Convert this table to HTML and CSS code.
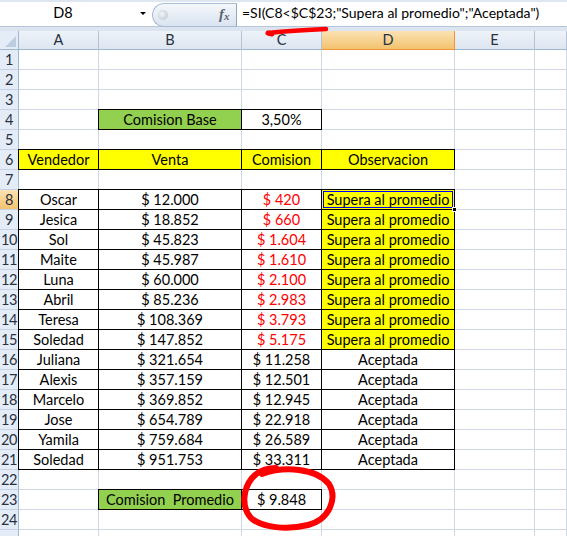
FILE: index.html
```html
<!DOCTYPE html>
<html>
<head>
<meta charset="utf-8">
<link rel="stylesheet" href="styles.css">
</head>
<body>
<div class="app">
  <div class="fbar">
    <div class="namebox">D8<span class="drop"></span></div>
    <div class="pill"><span class="knob"></span><span class="fx">f<sub>x</sub></span></div>
    <div class="formula">=SI(C8&lt;$C$23;"Supera al promedio";"Aceptada")</div>
  </div>
  <div class="band"></div>
  <div class="sheet">
    <div class="corner"></div><div class="ch">A</div><div class="ch">B</div><div class="ch">C</div><div class="ch sel">D</div><div class="ch">E</div><div class="ch"></div>

    <div class="rh">1</div><div class="c"></div><div class="c"></div><div class="c"></div><div class="c"></div><div class="c"></div><div class="c"></div>
    <div class="rh">2</div><div class="c"></div><div class="c"></div><div class="c"></div><div class="c"></div><div class="c"></div><div class="c"></div>
    <div class="rh">3</div><div class="c"></div><div class="c"></div><div class="c"></div><div class="c"></div><div class="c"></div><div class="c"></div>
    <div class="rh">4</div><div class="c"></div><div class="c b g">Comision Base</div><div class="c b">3,50%</div><div class="c"></div><div class="c"></div><div class="c"></div>
    <div class="rh">5</div><div class="c"></div><div class="c"></div><div class="c"></div><div class="c"></div><div class="c"></div><div class="c"></div>
    <div class="rh">6</div><div class="c b y">Vendedor</div><div class="c b y">Venta</div><div class="c b y">Comision</div><div class="c b y">Observacion</div><div class="c"></div><div class="c"></div>
    <div class="rh">7</div><div class="c"></div><div class="c"></div><div class="c"></div><div class="c"></div><div class="c"></div><div class="c"></div>
    <div class="rh sel">8</div><div class="c b">Oscar</div><div class="c b">$ 12.000</div><div class="c b r">$ 420</div><div class="c b y active">Supera al promedio<span class="handle"></span></div><div class="c"></div><div class="c"></div>
    <div class="rh">9</div><div class="c b">Jesica</div><div class="c b">$ 18.852</div><div class="c b r">$ 660</div><div class="c b y">Supera al promedio</div><div class="c"></div><div class="c"></div>
    <div class="rh">10</div><div class="c b">Sol</div><div class="c b">$ 45.823</div><div class="c b r">$ 1.604</div><div class="c b y">Supera al promedio</div><div class="c"></div><div class="c"></div>
    <div class="rh">11</div><div class="c b">Maite</div><div class="c b">$ 45.987</div><div class="c b r">$ 1.610</div><div class="c b y">Supera al promedio</div><div class="c"></div><div class="c"></div>
    <div class="rh">12</div><div class="c b">Luna</div><div class="c b">$ 60.000</div><div class="c b r">$ 2.100</div><div class="c b y">Supera al promedio</div><div class="c"></div><div class="c"></div>
    <div class="rh">13</div><div class="c b">Abril</div><div class="c b">$ 85.236</div><div class="c b r">$ 2.983</div><div class="c b y">Supera al promedio</div><div class="c"></div><div class="c"></div>
    <div class="rh">14</div><div class="c b">Teresa</div><div class="c b">$ 108.369</div><div class="c b r">$ 3.793</div><div class="c b y">Supera al promedio</div><div class="c"></div><div class="c"></div>
    <div class="rh">15</div><div class="c b">Soledad</div><div class="c b">$ 147.852</div><div class="c b r">$ 5.175</div><div class="c b y">Supera al promedio</div><div class="c"></div><div class="c"></div>
    <div class="rh">16</div><div class="c b">Juliana</div><div class="c b">$ 321.654</div><div class="c b">$ 11.258</div><div class="c b">Aceptada</div><div class="c"></div><div class="c"></div>
    <div class="rh">17</div><div class="c b">Alexis</div><div class="c b">$ 357.159</div><div class="c b">$ 12.501</div><div class="c b">Aceptada</div><div class="c"></div><div class="c"></div>
    <div class="rh">18</div><div class="c b">Marcelo</div><div class="c b">$ 369.852</div><div class="c b">$ 12.945</div><div class="c b">Aceptada</div><div class="c"></div><div class="c"></div>
    <div class="rh">19</div><div class="c b">Jose</div><div class="c b">$ 654.789</div><div class="c b">$ 22.918</div><div class="c b">Aceptada</div><div class="c"></div><div class="c"></div>
    <div class="rh">20</div><div class="c b">Yamila</div><div class="c b">$ 759.684</div><div class="c b">$ 26.589</div><div class="c b">Aceptada</div><div class="c"></div><div class="c"></div>
    <div class="rh">21</div><div class="c b">Soledad</div><div class="c b">$ 951.753</div><div class="c b">$ 33.311</div><div class="c b">Aceptada</div><div class="c"></div><div class="c"></div>
    <div class="rh">22</div><div class="c"></div><div class="c"></div><div class="c"></div><div class="c"></div><div class="c"></div><div class="c"></div>
    <div class="rh">23</div><div class="c"></div><div class="c b g">Comision&nbsp; Promedio</div><div class="c b">$ 9.848</div><div class="c"></div><div class="c"></div><div class="c"></div>
    <div class="rh">24</div><div class="c"></div><div class="c"></div><div class="c"></div><div class="c"></div><div class="c"></div><div class="c"></div>
    <div class="rh"></div><div class="c"></div><div class="c"></div><div class="c"></div><div class="c"></div><div class="c"></div><div class="c"></div>
  </div>
  <svg class="ink" width="567" height="536" viewBox="0 0 567 536">
    <path d="M268 33 C 285 31, 305 30, 326 29" fill="none" stroke="#ff0000" stroke-width="4.5" stroke-linecap="round"/>
    <path d="M268 33 L 272 34" fill="none" stroke="#ff0000" stroke-width="5" stroke-linecap="round"/>
    <path d="M262 474 C 284 466, 316 468, 329 484 C 337 497, 331 519, 308 525 C 287 530, 262 528, 251 518 C 241 507, 243 489, 252 478 C 258 471, 266 468, 276 468" fill="none" stroke="#ff0000" stroke-width="6" stroke-linecap="round" stroke-linejoin="round"/>
  </svg>
</div>
</body>
</html>
```
FILE: styles.css
```css
html, body {
  margin: 0;
  padding: 0;
  background: #ffffff;
  overflow: hidden;
}
.app {
  position: relative;
  width: 567px;
  height: 536px;
  overflow: hidden;
  font-family: Lato, "Liberation Sans", sans-serif;
  font-size: 14.5px;
  color: #000;
}
.fbar {
  display: flex;
  height: 26px;
  box-sizing: border-box;
  border-top: 2px solid #dde6f1;
  background: #fff;
}
.namebox {
  position: relative;
  width: 152px;
  box-sizing: border-box;
  text-align: center;
  line-height: 22px;
  padding-right: 26px;
  font-size: 14.5px;
}
.drop {
  position: absolute;
  right: 6px;
  top: 10px;
  width: 0;
  height: 0;
  border-left: 3px solid transparent;
  border-right: 3px solid transparent;
  border-top: 3px solid #000;
}
.pill {
  position: relative;
  width: 85px;
  height: 24px;
  margin-top: 1px;
  box-sizing: border-box;
  border: 1px solid #a9bcd5;
  border-right: 1px solid #8ea5c4;
  border-radius: 12px 0 0 12px;
  background: linear-gradient(#f4f7fb, #d9e3f0);
}
.knob {
  position: absolute;
  left: 5px;
  top: 6px;
  width: 10px;
  height: 10px;
  border-radius: 50%;
  background: radial-gradient(circle at 40% 40%, #f4f6f9, #b7c0cc);
}
.fx {
  position: absolute;
  left: 66px;
  top: 2px;
  font-family: "Liberation Serif", serif;
  font-style: italic;
  font-weight: bold;
  font-size: 15px;
  color: #5d6470;
}
.fx sub {
  font-size: 11px;
  vertical-align: -1px;
}
.formula {
  padding-left: 5px;
  line-height: 22px;
  font-size: 14px;
  white-space: nowrap;
}
.band {
  height: 4px;
  background: #dbe4ef;
  border-top: 1px solid #b7c6d9;
}
.sheet {
  display: grid;
  grid-template-columns: 19px 80px 143px 80px 133px 80px 1fr;
  grid-template-rows: 19px;
  grid-auto-rows: 20px;
}
.corner {
  position: relative;
  background: #e4ecf7;
  border-right: 1px solid #9eb6ce;
  border-bottom: 1px solid #9eb6ce;
  box-sizing: border-box;
}
.corner::after {
  content: "";
  position: absolute;
  right: 2px;
  bottom: 2px;
  width: 0;
  height: 0;
  border-left: 11px solid transparent;
  border-bottom: 11px solid #bccde2;
}
.ch {
  box-sizing: border-box;
  background: linear-gradient(#eef3f9, #dde5f0);
  border-right: 1px solid #b6c3d5;
  border-bottom: 1px solid #9eb6ce;
  text-align: center;
  line-height: 18px;
  color: #27313f;
}
.ch.sel {
  background: linear-gradient(#fbe2b4, #f2c36e);
  border-right: 1px solid #f29536;
  border-bottom: 1px solid #f29536;
}
.rh {
  box-sizing: border-box;
  background: #e4ecf7;
  border-right: 1px solid #9eb6ce;
  border-bottom: 1px solid #c5d2e3;
  text-align: center;
  line-height: 20px;
  color: #27313f;
  font-size: 14.5px;
  letter-spacing: -0.5px;
}
.rh.sel {
  background: linear-gradient(#fbe2b4, #f2c36e);
  border-right: 1px solid #f29536;
}
.c {
  box-sizing: border-box;
  border-right: 1px solid #d0d7e5;
  border-bottom: 1px solid #d0d7e5;
  text-align: center;
  line-height: 20px;
  white-space: nowrap;
  overflow: hidden;
}
.c.b {
  border-right-color: #000;
  border-bottom-color: #000;
  box-shadow: -1px 0 0 #000, 0 -1px 0 #000, -1px -1px 0 #000;
}
.c.g { background: #92d050; }
.c.y { background: #ffff00; }
.c.r { color: #ff0000; }
.c.active {
  position: relative;
  overflow: visible;
  box-shadow: -1px 0 0 #000, 0 -1px 0 #000, -1px -1px 0 #000, inset 0 0 0 1px #ffff00, inset 0 0 0 2px #0000ff;
}
.handle {
  position: absolute;
  right: -3px;
  bottom: -3px;
  width: 5px;
  height: 5px;
  background: #000;
  border: 1px solid #fff;
  box-sizing: border-box;
  z-index: 2;
}
.ink {
  position: absolute;
  left: 0;
  top: 0;
  pointer-events: none;
}
```
